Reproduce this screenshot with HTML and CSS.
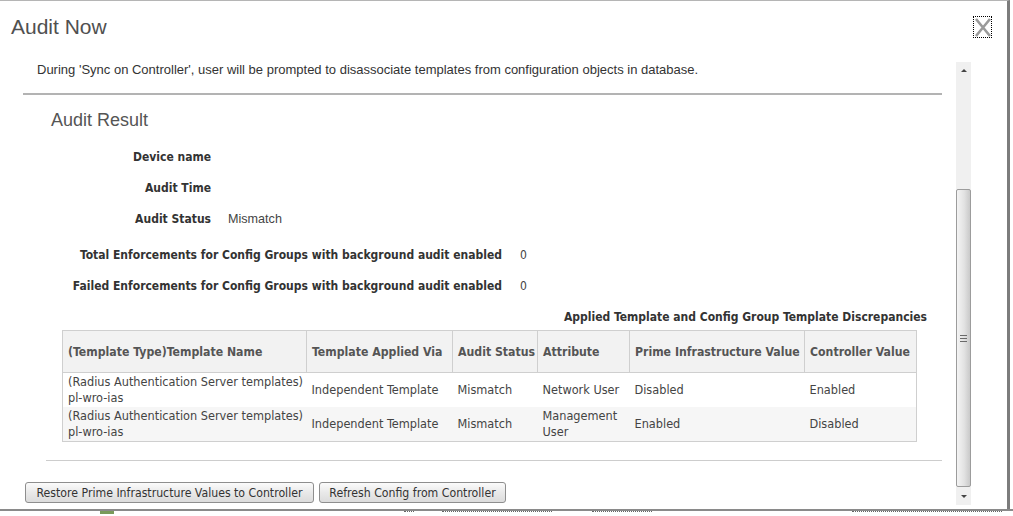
FILE: index.html
```html
<!DOCTYPE html>
<html lang="en">
<head>
    <meta charset="UTF-8">
    <meta name="viewport" content="width=device-width, initial-scale=1.0">
    <title>Audit Now</title>
    <link rel="stylesheet" href="styles.css">
</head>
<body>
<div class="dialog">
  <!-- title bar -->
  <div class="dialog-header">
    <h1 class="dialog-title">Audit Now</h1>
    <button class="close-btn" title="Close">
      <svg width="16" height="19" viewBox="0 0 16 19">
        <path d="M1 1 L15 18 M15 1 L1 18" stroke="#9a9a9a" stroke-width="2.6" fill="none"/>
      </svg>
    </button>
  </div>

  <div class="dialog-body">
    <div class="scroll-content">
      <p class="sync-note">During 'Sync on Controller', user will be prompted to disassociate templates from configuration objects in database.</p>
      <hr class="sep-strong">

      <h2 class="section-title">Audit Result</h2>

      <div class="info-grid">
        <div class="info-label">Device name</div><div class="info-value"></div>
        <div class="info-label">Audit Time</div><div class="info-value"></div>
        <div class="info-label">Audit Status</div><div class="info-value">Mismatch</div>
      </div>

      <div class="info-grid wide">
        <div class="info-label">Total Enforcements for Config Groups with background audit enabled</div><div class="info-value">0</div>
        <div class="info-label">Failed Enforcements for Config Groups with background audit enabled</div><div class="info-value">0</div>
      </div>

      <div class="table-caption">Applied Template and Config Group Template Discrepancies</div>
      <table class="discrepancy-table">
        <thead>
          <tr>
            <th class="c1">(Template Type)Template Name</th>
            <th class="c2">Template Applied Via</th>
            <th class="c3">Audit Status</th>
            <th class="c4">Attribute</th>
            <th class="c5">Prime Infrastructure Value</th>
            <th class="c6">Controller Value</th>
          </tr>
        </thead>
        <tbody>
          <tr>
            <td>(Radius Authentication Server templates)<br>pl-wro-ias</td>
            <td>Independent Template</td>
            <td>Mismatch</td>
            <td>Network User</td>
            <td>Disabled</td>
            <td>Enabled</td>
          </tr>
          <tr>
            <td>(Radius Authentication Server templates)<br>pl-wro-ias</td>
            <td>Independent Template</td>
            <td>Mismatch</td>
            <td>Management<br>User</td>
            <td>Enabled</td>
            <td>Disabled</td>
          </tr>
        </tbody>
      </table>

      <hr class="sep-light">

      <div class="button-row">
        <button class="btn btn-restore">Restore Prime Infrastructure Values to Controller</button>
        <button class="btn btn-refresh">Refresh Config from Controller</button>
      </div>
    </div>

    <!-- fake scrollbar -->
    <div class="scrollbar">
      <div class="sb-arrow"><span class="tri-up"></span></div>
      <div class="sb-track">
        <div class="sb-thumb">
          <svg width="7" height="7" viewBox="0 0 7 7">
            <path d="M0 0.5 H7 M0 3.5 H7 M0 6.5 H7" stroke="#6a6a6a" stroke-width="1"/>
          </svg>
        </div>
      </div>
      <div class="sb-arrow"><span class="tri-down"></span></div>
    </div>
  </div>
</div>

<!-- page behind the dialog, only a sliver shows -->
<div class="backdrop">
  <span class="bg-mark m1"></span>
  <span class="bg-mark m2"></span>
  <span class="bg-mark m3"></span>
  <span class="bg-mark m4"></span>
  <span class="bg-mark m5"></span>
</div>
</body>
</html>
```

FILE: styles.css
```css
:root {
    --text-color: #333;
    --muted-color: #555;
    --border-color: #cfcfcf;
    --ui-font: "DejaVu Sans Condensed", "DejaVu Sans", sans-serif;
}

body {
    margin: 0;
    width: 1013px;
    height: 516px;
    overflow: hidden;
    background: #fff;
    font-family: "Liberation Sans", Arial, sans-serif;
    color: var(--text-color);
}

/* Dialog frame */
.dialog {
    width: 1007px;
    height: 508px;
    border-top: 1px solid #b5b5b5;
    border-right: 3px solid #7c7c7c;
    background: #fff;
    display: flex;
    flex-direction: column;
}

.dialog-header {
    height: 61px;
    display: flex;
    align-items: flex-start;
    justify-content: space-between;
}

.dialog-title {
    margin: 14px 0 0 11px;
    font-size: 21px;
    font-weight: normal;
    color: #505050;
    line-height: 24px;
}

.close-btn {
    margin: 15px 15px 0 0;
    width: 19px;
    height: 22px;
    padding: 0;
    border: 1px dotted #000;
    background: #fff;
    display: flex;
    align-items: center;
    justify-content: center;
}

.dialog-body {
    flex: 1;
    display: flex;
    padding-left: 23px;
    padding-right: 36px;
}

.scroll-content {
    flex: 1;
    font-size: 12px;
}

.sync-note {
    margin: 0;
    padding-left: 14px;
    font-size: 13px;
    line-height: 16px;
    color: #333;
}

.sep-strong {
    margin: 15px 14px 0 0;
    border: none;
    border-top: 2px solid #b3b3b3;
}

.section-title {
    margin: 15px 0 0 28px;
    font-size: 18px;
    font-weight: normal;
    line-height: 20px;
    color: var(--muted-color);
}

/* label / value pairs */
.info-grid {
    display: grid;
    grid-template-columns: 188px auto;
    column-gap: 17px;
    grid-auto-rows: 31px;
    align-items: center;
    margin-top: 11px;
}

.info-grid.wide {
    grid-template-columns: 479px auto;
    column-gap: 18px;
    margin-top: 5px;
}

.info-label {
    text-align: right;
    font-family: var(--ui-font);
    font-weight: bold;
    font-size: 12px;
    color: #333;
}

.info-value {
    font-size: 12.6px;
    color: #444;
}

.info-grid.wide .info-value {
    font-family: var(--ui-font);
    font-size: 12px;
}

.table-caption {
    margin: 8px 29px 0 0;
    text-align: right;
    font-family: var(--ui-font);
    font-weight: bold;
    font-size: 12px;
    line-height: 16px;
    color: #333;
}

/* Discrepancy table */
.discrepancy-table {
    margin: 5px 0 0 39px;
    width: 854px;
    border-collapse: collapse;
    border: 1px solid var(--border-color);
    font-family: var(--ui-font);
    font-size: 12.6px;
    color: #444;
    table-layout: fixed;
}

.discrepancy-table th {
    height: 41px;
    padding: 0 5px;
    text-align: left;
    font-size: 12.2px;
    font-weight: bold;
    color: #555;
    background: #f2f2f2;
    border: 1px solid var(--border-color);
    white-space: nowrap;
}

.discrepancy-table td {
    height: 34px;
    padding: 0 0 0 5px;
    line-height: 16px;
    vertical-align: middle;
}

.discrepancy-table tbody tr:nth-child(even) {
    background: #f6f6f6;
}

.c1 { width: 233px; }
.c2 { width: 135px; }
.c3 { width: 74px; }
.c4 { width: 81px; }
.c5 { width: 164px; }
.c6 { width: 101px; }

.sep-light {
    margin: 18px 14px 0 23px;
    border: none;
    border-top: 1px solid #cdcdcd;
}

.button-row {
    margin: 21px 0 0 2px;
    display: flex;
    gap: 5px;
}

.btn {
    height: 21px;
    padding: 0 8px;
    font-family: var(--ui-font);
    font-size: 12.2px;
    color: #333;
    border: 1px solid #8e8e8e;
    border-radius: 3px;
    background: linear-gradient(#fbfbfb, #e9e9e9 50%, #dcdcdc);
}

.btn-restore { width: 289px; }
.btn-refresh { width: 187px; }

/* Scrollbar drawing */
.scrollbar {
    width: 15px;
    height: 443px;
    background: #f0f0f0;
    display: flex;
    flex-direction: column;
}

.sb-arrow {
    height: 17px;
    display: flex;
    align-items: center;
    justify-content: center;
}

.tri-up, .tri-down {
    width: 0;
    height: 0;
    border-left: 3px solid transparent;
    border-right: 3px solid transparent;
}

.tri-up { border-bottom: 3px solid #444; }
.tri-down { border-top: 3px solid #444; }

.sb-track {
    flex: 1;
    display: flex;
    flex-direction: column;
    justify-content: flex-end;
    padding-bottom: 1px;
}

.sb-thumb {
    height: 296px;
    border: 1px solid #9c9c9c;
    border-radius: 2px;
    background: linear-gradient(to right, #f4f4f4, #e2e2e2 55%, #c9c9c9);
    display: flex;
    align-items: center;
    justify-content: center;
}

/* Page behind the dialog */
.backdrop {
    height: 7px;
    border-top: 2px solid #8a8a8a;
    overflow: hidden;
    display: flex;
    align-items: flex-start;
}

.bg-mark {
    height: 3px;
    border-top: 1px dotted #666;
}

.m1 { margin-left: 100px; width: 14px; border-top: 3px solid #7a9a5a; }
.m2 { margin-left: 290px; width: 10px; }
.m3 { margin-left: 28px; width: 110px; }
.m4 { margin-left: 40px; width: 60px; }
.m5 { margin-left: 200px; width: 150px; }
```
